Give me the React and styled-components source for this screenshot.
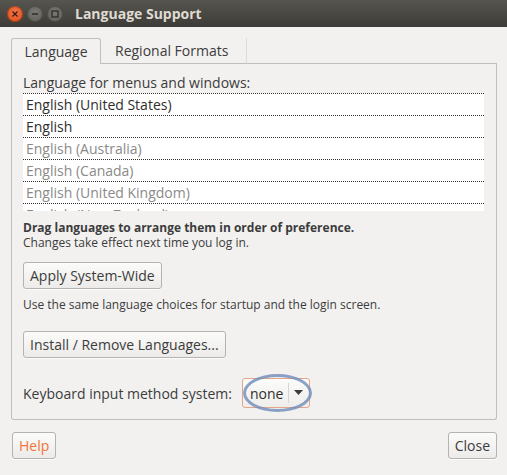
import React from "react";
import styled, { createGlobalStyle } from "styled-components";

const GlobalStyle = createGlobalStyle`
	html, body { margin: 0; padding: 0; background: #f2f1f0; }
	body { font-family: "Open Sans", "DejaVu Sans", sans-serif; color: #3c3c3c; }
`;

const Window = styled.div`
	width: 507px;
	height: 475px;
	display: flex;
	flex-direction: column;
	background: #f2f1f0;
	overflow: hidden;
`;

const TitleBar = styled.div`
	height: 27px;
	display: flex;
	align-items: center;
	padding-left: 7px;
	gap: 4px;
	background: linear-gradient(#57554f, #3c3b37);
`;

const WinButton = styled.span`
	width: 16px;
	height: 16px;
	border-radius: 50%;
	display: flex;
	align-items: center;
	justify-content: center;
	background: ${(p) => (p.$close ? "radial-gradient(circle at 50% 40%, #f2774a, #dd4814)" : "radial-gradient(circle at 50% 40%, #7a7872, #5d5b55)")};
	box-shadow: inset 0 0 0 1px rgba(0, 0, 0, 0.25);
`;

const Title = styled.span`
	margin-left: 8px;
	font-weight: bold;
	font-size: 14px;
	color: #dfdbd2;
`;

const Body = styled.div`
	flex: 1;
	display: flex;
	flex-direction: column;
	padding: 11px 10px 0 11px;
`;

const Tabs = styled.div`
	display: flex;
	height: 26px;
	align-items: stretch;
`;

const Tab = styled.div`
	display: flex;
	align-items: center;
	padding: 0 ${(p) => (p.$active ? "16px" : "14px")};
	font-size: 14px;
	color: #3c3c3c;
	box-sizing: border-box;
	${(p) =>
		p.$active
			? `border: 1px solid #c0bfbc; border-bottom: none; border-radius: 3px 3px 0 0; background: #f2f1f0; width: 90px; justify-content: center;`
			: `border-right: 1px solid #dcdbd8; border-bottom: 1px solid #c0bfbc; width: 146px;`}
`;

const TabFill = styled.div`
	flex: 1;
	border-bottom: 1px solid #c0bfbc;
`;

const Panel = styled.div`
	height: 356px;
	box-sizing: border-box;
	border: 1px solid #c0bfbc;
	border-top: none;
	border-radius: 0 0 3px 3px;
	padding: 10px 12px 0 11px;
	display: flex;
	flex-direction: column;
`;

const Label = styled.div`
	font-size: 14px;
	line-height: 18px;
`;

const List = styled.div`
	height: 118px;
	overflow: hidden;
	background: #fff;
	margin-top: 1px;
`;

const Row = styled.div`
	height: 22px;
	box-sizing: border-box;
	border-top: 1px dotted #333;
	padding-left: 3px;
	font-size: 14px;
	line-height: 21px;
	overflow: hidden;
	color: ${(p) => (p.$dim ? "#8a8a88" : "#2e2e2e")};
`;

const Hint = styled.div`
	font-size: 12px;
	line-height: 15px;
	font-weight: ${(p) => (p.$bold ? "bold" : "normal")};
	margin-top: ${(p) => p.$top || 0}px;
`;

const Button = styled.button`
	align-self: flex-start;
	height: 27px;
	box-sizing: border-box;
	padding: 0 ${(p) => p.$pad || 6}px;
	border: 1px solid #b4b3ae;
	border-radius: 3px;
	background: linear-gradient(#fbfbfa, #ecebe9);
	font-family: inherit;
	font-size: 14px;
	color: ${(p) => (p.$accent ? "#f0743c" : "#3c3c3c")};
	margin-top: ${(p) => p.$top || 0}px;
	box-shadow: 0 1px 0 rgba(255, 255, 255, 0.8);
`;

const KeyRow = styled.div`
	display: flex;
	align-items: center;
	gap: 10px;
	margin-top: 20px;
	font-size: 14px;
`;

const Combo = styled.div`
	position: relative;
	height: 30px;
	width: 68px;
	box-sizing: border-box;
	border: 1px solid #e5a58c;
	border-radius: 3px;
	background: linear-gradient(#fbfbfa, #efeeec);
	display: flex;
	align-items: center;
	padding-left: 7px;
	font-size: 14px;
	color: #2e2e2e;

	&::before {
		content: "";
		position: absolute;
		left: 0px;
		top: -5px;
		width: 69px;
		height: 38px;
		box-sizing: border-box;
		border: 3px solid rgba(110, 140, 185, 0.8);
		border-radius: 50%;
	}
`;

const ComboSep = styled.span`
	width: 1px;
	height: 20px;
	background: #d6d5d2;
	margin-left: 5px;
	margin-right: 5px;
`;

const Footer = styled.div`
	display: flex;
	justify-content: space-between;
	margin-top: 12px;
	padding-left: 1px;
`;

export default function App() {
	return (
		<Window>
			<GlobalStyle />
			<TitleBar>
				<WinButton $close>
					<svg width='8' height='8' viewBox='0 0 8 8'>
						<path d='M1.5 1.5 L6.5 6.5 M6.5 1.5 L1.5 6.5' stroke='#3a1a10' strokeWidth='1.3' />
					</svg>
				</WinButton>
				<WinButton>
					<svg width='8' height='8' viewBox='0 0 8 8'>
						<path d='M1 4 H7' stroke='#2e2d2a' strokeWidth='1.5' />
					</svg>
				</WinButton>
				<WinButton>
					<svg width='8' height='8' viewBox='0 0 8 8'>
						<rect x='1' y='1' width='6' height='6' fill='none' stroke='#2e2d2a' strokeWidth='1.3' />
					</svg>
				</WinButton>
				<Title>Language Support</Title>
			</TitleBar>
			<Body>
				<Tabs>
					<Tab $active>Language</Tab>
					<Tab>Regional Formats</Tab>
					<TabFill />
				</Tabs>
				<Panel>
					<Label>Language for menus and windows:</Label>
					<List>
						<Row>English (United States)</Row>
						<Row>English</Row>
						<Row $dim>English (Australia)</Row>
						<Row $dim>English (Canada)</Row>
						<Row $dim>English (United Kingdom)</Row>
						<Row $dim>English (New Zealand)</Row>
					</List>
					<Hint $bold $top={9}>
						Drag languages to arrange them in order of preference.
					</Hint>
					<Hint>Changes take effect next time you log in.</Hint>
					<Button $top={12}>Apply System-Wide</Button>
					<Hint $top={8}>Use the same language choices for startup and the login screen.</Hint>
					<Button $top={19}>Install / Remove Languages...</Button>
					<KeyRow>
						Keyboard input method system:
						<Combo>
							none
							<ComboSep />
							<svg width='9' height='6' viewBox='0 0 9 6'>
								<path d='M0 0 H9 L4.5 5 Z' fill='#3c3c3c' />
							</svg>
						</Combo>
					</KeyRow>
				</Panel>
				<Footer>
					<Button $accent>Help</Button>
					<Button>Close</Button>
				</Footer>
			</Body>
		</Window>
	);
}
